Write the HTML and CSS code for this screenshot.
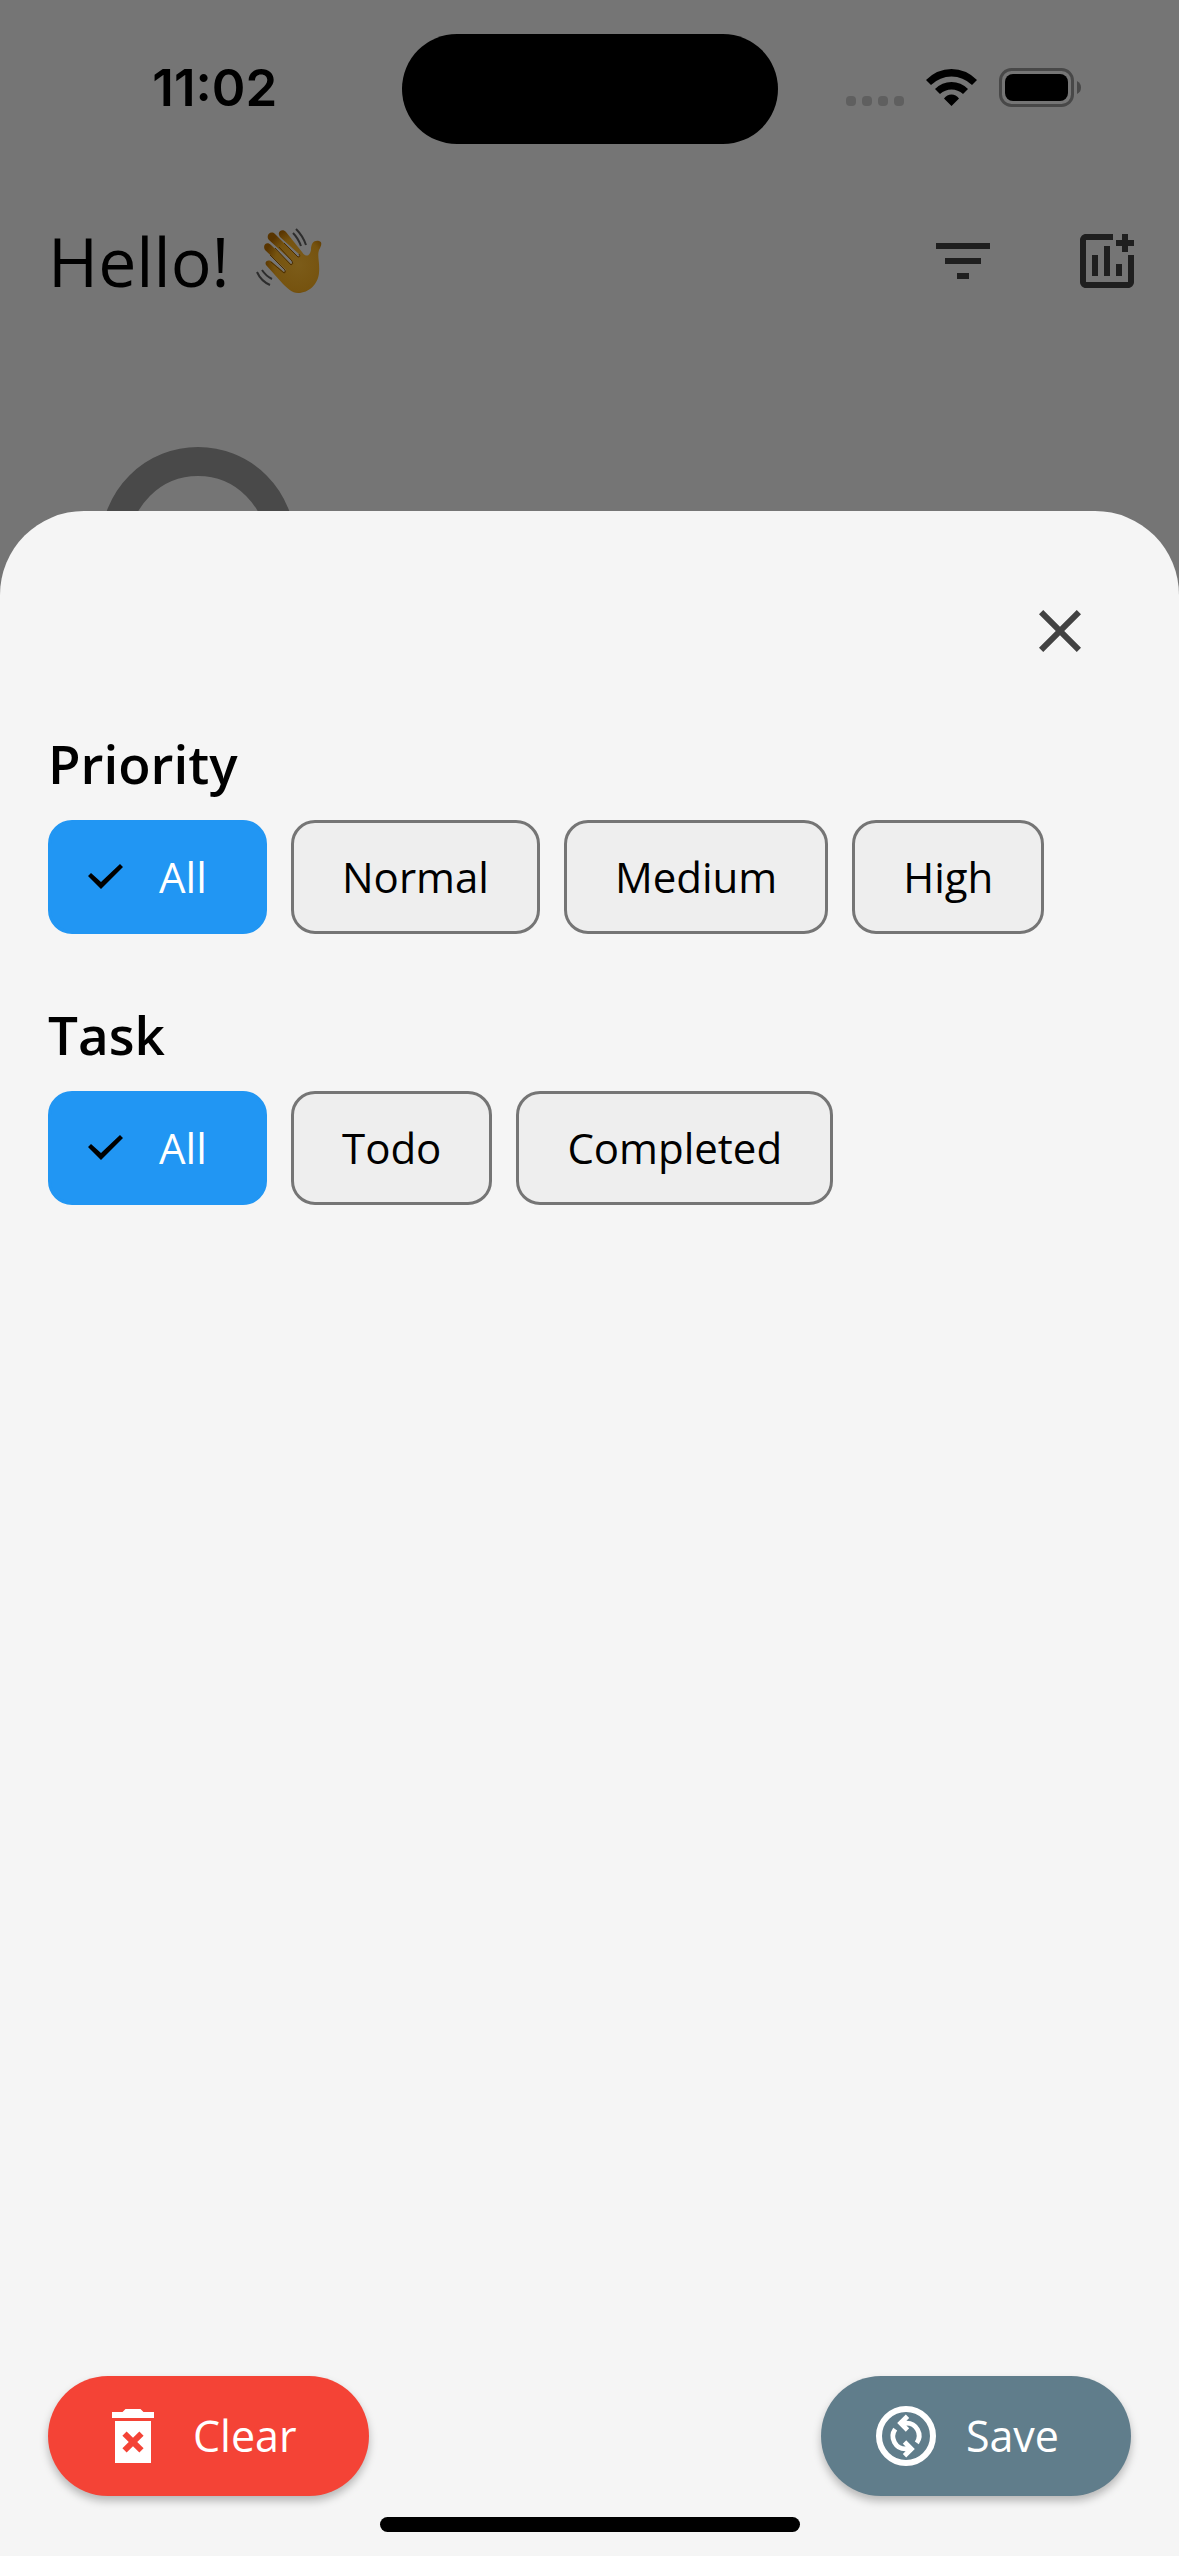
FILE: index.html
```html
<!DOCTYPE html>
<html lang="en">
<head>
<meta charset="utf-8">
<meta name="viewport" content="width=device-width, initial-scale=1">
<title>Filter tasks</title>
<link rel="stylesheet" href="styles.css">
</head>
<body>
<div class="status">
  <time class="clock">11:02</time>
  <div class="island"></div>
  <div class="signals">
    <svg class="dots" viewBox="0 0 58 10" aria-hidden="true"><rect width="10" height="10" rx="4"/><rect x="16" width="10" height="10" rx="4"/><rect x="32" width="10" height="10" rx="4"/><rect x="48" width="10" height="10" rx="4"/></svg>
    <svg class="wifi" viewBox="0 0 51 37" aria-hidden="true"><path d="M0 11Q11 0 25.500 0T51 11L46 16Q37 7.500 25.500 7.500T5 16ZM9 20Q16 13 25.500 13T42 20L37 25Q32 20.500 25.500 20.500T14 25ZM18 29.500Q21 25.500 25.500 25.500T33 29.500L25.500 37Z"/></svg>
    <svg class="battery" viewBox="0 0 82 39" aria-hidden="true"><rect x="1.500" y="1.500" width="72" height="36" rx="11" fill="none" stroke="#484848" stroke-width="3"/><rect x="6" y="6" width="63" height="27" rx="8"/><path d="M78 13Q82 15 82 19.500T78 26Z" fill="#484848"/></svg>
  </div>
</div>
<header class="topbar">
  <h1 class="greeting">Hello!
    <svg class="wave" viewBox="0 0 66 66" role="img" aria-label="Waving hand">
      <defs><radialGradient id="skin" cx="0.6" cy="0.55" r="0.6"><stop offset="0" stop-color="#7c5c19"/><stop offset="0.7" stop-color="#76530f"/><stop offset="1" stop-color="#593500"/></radialGradient></defs>
      <path fill="url(#skin)" d="M10 37C8 33 13 31 16 34L28 44L30 42L9 22C6 17 11 13 15 17L35 36L37 34L13 12C9 7 15 2 19 6L42 29L44 27L24 9C20 3 27 0 30 4L46 24C50 30 54 28 55 22C55 15 58 12 63 13C67 14 65 18 63 22C61 28 64 35 63 45C62 56 53 65 42 65C36 65 31 60 27 56Z"/>
      <g fill="none" stroke="#4b2e02" stroke-width="1"><path d="M15 34L28 45Q30 45 29 42L14 27M19 20L35 37Q38 36 36 33L23 19M28 15L42 29Q45 29 43 26"/></g>
      <g fill="none" stroke="#2d2d2d" stroke-width="2"><path d="M37 5Q42 10 45 18M40 1Q47 8 50 17M6 42Q10 48 16 51M1 44Q5 53 14 57"/></g>
    </svg>
  </h1>
  <button class="icon-btn" type="button" aria-label="Filter"><svg viewBox="0 0 24 24"><path d="M10 18h4v-2h-4v2zM3 6v2h18V6H3zm3 7h12v-2H6v2z"/></svg></button>
  <button class="icon-btn" type="button" aria-label="Add task"><svg viewBox="0 0 24 24"><path d="M7 10h2v7H7zM11 7h2v10h-2zM15 13h2v4h-2zM19 10v9H5V5h9V3H5c-1.100 0-2 .9-2 2v14c0 1.100.9 2 2 2h14c1.100 0 2-.9 2-2v-9zM15 5h2V3h2v2h2v2h-2v2h-2V7h-2z"/></svg></button>
</header>
<div class="summary"><div class="ring"></div></div>

<form class="sheet">
  <div class="sheet-top">
    <button class="close" type="button" aria-label="Close"><svg viewBox="0 0 24 24"><path d="M19 6.410 17.590 5 12 10.590 6.410 5 5 6.410 10.590 12 5 17.590 6.410 19 12 13.410 17.590 19 19 17.590 13.410 12z"/></svg></button>
  </div>
  <fieldset class="group">
    <legend class="group-title">Priority</legend>
    <div class="chips">
      <label class="chip"><input type="radio" name="priority" checked>All</label>
      <label class="chip"><input type="radio" name="priority">Normal</label>
      <label class="chip"><input type="radio" name="priority">Medium</label>
      <label class="chip"><input type="radio" name="priority">High</label>
    </div>
  </fieldset>
  <fieldset class="group">
    <legend class="group-title">Task</legend>
    <div class="chips">
      <label class="chip"><input type="radio" name="task" checked>All</label>
      <label class="chip"><input type="radio" name="task">Todo</label>
      <label class="chip"><input type="radio" name="task">Completed</label>
    </div>
  </fieldset>
  <div class="actions">
    <button class="action clear" type="reset"><svg viewBox="0 0 24 24" aria-hidden="true"><path fill-rule="evenodd" d="M6 7h12v14H6zM8.460 11.880l1.410-1.410L12 12.590l2.120-2.120 1.410 1.410L13.410 14l2.120 2.120-1.410 1.410L12 15.410l-2.120 2.120-1.410-1.410L10.590 14zM15.500 4l-1-1h-5l-1 1H5v2h14V4z"/></svg>Clear</button>
    <button class="action save" type="submit"><svg viewBox="0 0 24 24" aria-hidden="true"><g fill="none" stroke="#fff"><circle cx="12" cy="12" r="9" stroke-width="2"/><path stroke-width="1.600" d="M10.400 7.700H12A4.200 4.200 0 0 1 15.600 14.300M12.500 5.400L10.200 7.700L12.500 10M13.600 16.300H12A4.200 4.200 0 0 1 8.400 9.700M11.500 18.600L13.800 16.300L11.500 14"/></g></svg>Save</button>
  </div>
  <div class="home"></div>
</form>
</body>
</html>
```
FILE: styles.css
```css
* { box-sizing: border-box; }

body {
  margin: 0;
  min-height: 100vh;
  display: flex;
  flex-direction: column;
  background: #757575;
  color: #000;
  font-family: "Open Sans", sans-serif;
}

button {
  border: 0;
  padding: 0;
  background: none;
  font: inherit;
}

svg { display: block; flex: none; }

.status {
  display: grid;
  grid-template-columns: 1fr 376px 1fr;
  align-items: center;
  padding: 34px 0 0;
}

.clock {
  padding: 0 0 3px 28px;
  text-align: center;
  font: 600 51px/60px Inter, sans-serif;
}

.island {
  height: 110px;
  border-radius: 55px;
  background: #000;
}

.signals {
  display: flex;
  align-items: flex-end;
  justify-content: flex-end;
  gap: 22px;
  padding: 0 98px 3px 0;
}

.dots { width: 58px; height: 10px; fill: #5f5f5f; }
.wifi { width: 51px; height: 37px; }
.dots, .wifi { margin-bottom: 1px; }
.battery { width: 82px; height: 39px; }

.topbar {
  display: flex;
  align-items: center;
  gap: 72px;
  height: 168px;
  margin-top: 33px;
  padding: 0 36px 0 48px;
}

.greeting {
  flex: 1;
  display: flex;
  align-items: center;
  gap: 26px;
  margin: 0;
  font-size: 68px;
  line-height: 88px;
  font-weight: 400;
}

.wave { width: 66px; height: 66px; }

.icon-btn svg { width: 72px; height: 72px; fill: #1f1f1f; }

.summary {
  height: 166px;
  padding: 102px 101px 0;
  overflow: hidden;
}

.ring {
  width: 194px;
  height: 194px;
  border: 29px solid #494949;
  border-radius: 50%;
}

.sheet {
  flex: 1;
  display: flex;
  flex-direction: column;
  padding: 48px 48px 24px;
  border-radius: 84px 84px 0 0;
  background: #f5f5f5;
}

.sheet-top {
  display: flex;
  justify-content: flex-end;
}

.close { padding: 36px 35px; }
.close svg { width: 72px; height: 72px; fill: #424242; }

.group {
  min-width: 0;
  margin: 0 0 40px;
  border: 0;
  padding: 0;
}

.group-title {
  padding: 27px 0 22px;
  font-size: 53px;
  line-height: 68px;
  font-weight: 600;
}

.chips {
  display: flex;
  flex-wrap: wrap;
  gap: 24px;
}

.chip {
  display: flex;
  align-items: center;
  height: 114px;
  padding: 0 48px;
  border: 3px solid #757575;
  border-radius: 24px;
  background: #eee;
  font-size: 42px;
  line-height: 56px;
}

.chip input {
  appearance: none;
  width: 0;
  height: 0;
  margin: 0;
}

.chip:has(input:checked) {
  min-width: 219px;
  padding-left: 37px;
  border-color: #2196f3;
  background: #2196f3;
  color: #fff;
}

.chip input:checked {
  width: 35px;
  height: 26px;
  margin-right: 36px;
  background: #000;
  clip-path: polygon(0 12px, 3px 9px, 13px 18px, 32px 0, 35px 3px, 13px 25px);
}

.actions {
  display: flex;
  justify-content: space-between;
  margin-top: auto;
}

.action {
  display: flex;
  align-items: center;
  gap: 24px;
  height: 120px;
  padding: 0 72px 0 49px;
  border-radius: 60px;
  color: #fff;
  font-size: 43px;
  line-height: 56px;
  box-shadow: 0 5px 8px rgba(0, 0, 0, 0.26);
}

.action svg { width: 72px; height: 72px; fill: #fff; }
.clear { background: #f44336; }
.save { background: #607d8b; }

.home {
  align-self: center;
  width: 420px;
  height: 15px;
  margin-top: 21px;
  border-radius: 8px;
  background: #000;
}
```
